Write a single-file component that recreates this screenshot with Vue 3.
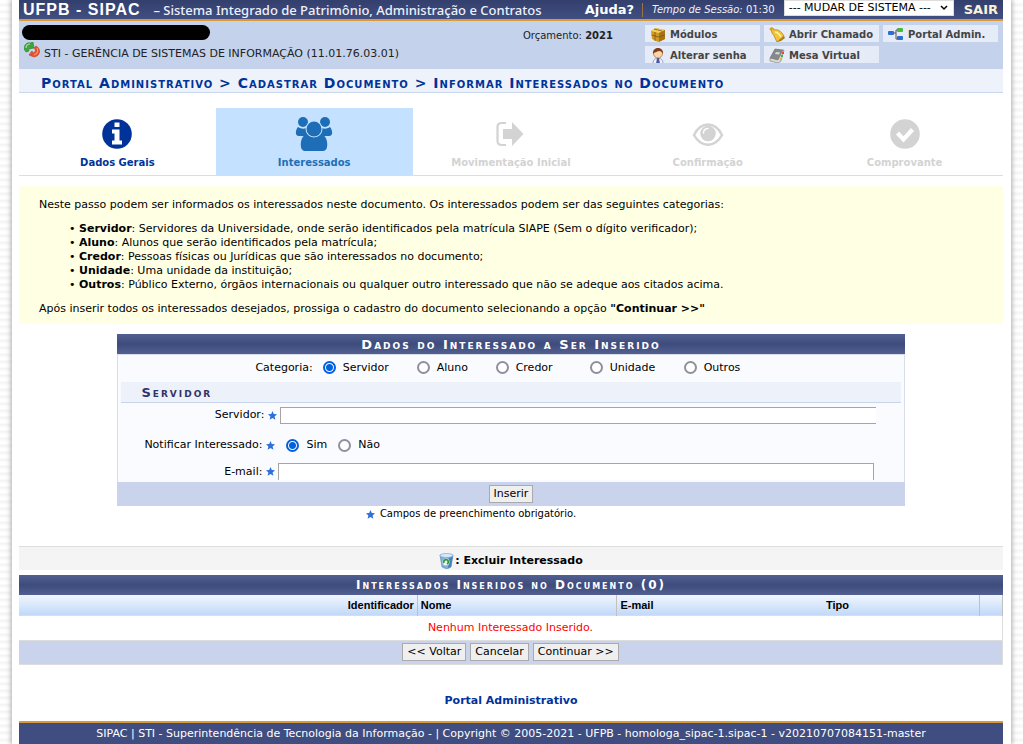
<script setup>
import { ref } from 'vue'

const categoria = ref('Servidor')
const notificar = ref('Sim')
const servidor = ref('')
const email = ref('')
const categorias = ['Servidor', 'Aluno', 'Credor', 'Unidade', 'Outros']
const ajuda = [
  ['Servidor', 'Servidores da Universidade, onde serão identificados pela matrícula SIAPE (Sem o dígito verificador);'],
  ['Aluno', 'Alunos que serão identificados pela matrícula;'],
  ['Credor', 'Pessoas físicas ou Jurídicas que são interessados no documento;'],
  ['Unidade', 'Uma unidade da instituição;'],
  ['Outros', 'Público Externo, órgãos internacionais ou qualquer outro interessado que não se adeque aos citados acima.'],
]
</script>

<template>
  <div class="page">
    <header>
      <div class="topbar">
        <h1>UFPB - SIPAC</h1>
        <span class="subtitle">– Sistema Integrado de Patrimônio, Administração e Contratos</span>
        <a class="help" href="#">Ajuda?</a>
        <span class="session"><em>Tempo de Sessão:</em> 01:30</span>
        <select aria-label="Mudar de sistema">
          <option>--- MUDAR DE SISTEMA ---</option>
        </select>
        <a class="exit" href="#">SAIR</a>
      </div>
      <div class="userbar">
        <div class="user">
          <div class="redacted"></div>
          <div class="unit">
            <svg width="16" height="16" viewBox="0 0 16 16">
              <path d="M0 7C0 3 3 0 6 1l3-1 1 6-5 1 1-3C4 4 4 6 5 9L2 10z" fill="#3fa63c" stroke="#278128" stroke-width=".6" />
              <path d="M2 6c0-3 2-4 4-4" fill="none" stroke="#a5e49a" stroke-width="1.200" />
              <path d="M12 4c4 2 5 7 1 10l-3 1-5-2 3-4 1 2c3-1 3-3 1-5z" fill="#e5532c" stroke="#c43a1b" stroke-width=".6" />
              <path d="M13 6c2 3 0 6-3 7" fill="none" stroke="#ff9a72" stroke-width="1.200" />
            </svg>
            <span>STI - GERÊNCIA DE SISTEMAS DE INFORMAÇÃO (11.01.76.03.01)</span>
          </div>
        </div>
        <div class="budget">Orçamento: <b>2021</b></div>
        <nav class="shortcuts">
          <a href="#">
            <svg width="16" height="16" viewBox="0 0 16 16">
              <path d="M1 4l5-3 9 2v9l-7 3-6-3z" fill="#d39a22" />
              <path d="M1 4l5-3 9 2-6 3z" fill="#f3cf63" />
              <path d="M9 6l6-3v9l-6 3z" fill="#a87312" />
              <path d="M5 5v9M1.500 8l7 2 6-2M4 2l8 2" stroke="#7d570f" stroke-width=".8" fill="none" />
            </svg>Módulos</a>
          <a href="#">
            <svg width="16" height="16" viewBox="0 0 16 16">
              <path d="M2 1l2 0 1 2c4-1 7 1 10 6l-7 6C6 12 6 9 3 6z" fill="#f2c437" stroke="#b98413" stroke-width=".8" />
              <path d="M6 5c3 0 4 2 6 5" stroke="#fff3a6" stroke-width="1.500" fill="none" />
              <path d="M15 9l-7 6 4-1 4-3z" fill="#b27a10" />
              <circle cx="2" cy="2" r="1.500" fill="#d89f1c" />
            </svg>Abrir Chamado</a>
          <a href="#">
            <svg width="16" height="16" viewBox="0 0 16 16">
              <path d="M5 6h3M8 3v9M8 3h3M8 12h3" stroke="#555" fill="none" />
              <rect x="0" y="4" width="6" height="4" rx="1" fill="#2c6fd0" />
              <rect x="9" y="1" width="6" height="4" rx="1" fill="#4cb63f" />
              <rect x="9" y="9" width="6" height="4" rx="1" fill="#2c6fd0" />
            </svg>Portal Admin.</a>
          <a href="#">
            <svg width="16" height="16" viewBox="0 0 16 16">
              <path d="M3 16c0-4 2-6 5-6s5 2 5 6z" fill="#eef1fb" stroke="#8089b8" stroke-width=".8" />
              <path d="M7 10h2l1 6H6z" fill="#4858a8" />
              <circle cx="8" cy="5.500" r="4.500" fill="#fbd3a5" stroke="#9b5a2c" stroke-width=".6" />
              <path d="M3 6c-1-8 11-8 10 0-1-2-2-3-4-3-2 1-5 1-6 3z" fill="#7c3f19" />
            </svg>Alterar senha</a>
          <a href="#">
            <svg width="16" height="16" viewBox="0 0 16 16">
              <path d="M1 10L6 1l8 1-3 9-3 3z" fill="#858989" stroke="#666" stroke-width=".6" />
              <path d="M1 10l8 2 5-10 1 0-3 11-3 2-8-2z" fill="#d9dcda" stroke="#777" stroke-width=".6" />
              <path d="M7 4l4 .5-1 2-4-.5z" fill="#d5d8d8" />
              <path d="M14 4v2" stroke="#e34b35" stroke-width="2" /><path d="M13 7v2" stroke="#4cae3b" stroke-width="2" /><path d="M12 10v2" stroke="#e6b62d" stroke-width="2" />
            </svg>Mesa Virtual</a>
        </nav>
      </div>
      <h2 class="crumbs">Portal Administrativo &gt; Cadastrar Documento &gt; Informar Interessados no Documento</h2>
    </header>

    <ol class="steps">
      <li class="done">
        <svg width="36" height="36" viewBox="0 0 36 36">
          <circle cx="18" cy="18" r="14.800" fill="currentColor" />
          <path d="M15.500 6.500h5v4.500h-5zM13 13.500h7.500v11H23v4H13v-4h2.500v-7H13z" fill="#fff" />
        </svg>Dados Gerais</li>
      <li class="active">
        <svg width="38" height="36" viewBox="0 0 38 36">
          <g fill="currentColor">
            <circle cx="8" cy="6" r="5" /><circle cx="30" cy="6" r="5" />
            <path d="M3 11c3 2 6 2 8 1 0 3 1 6 3 8H4c-5 0-3-7-1-9zM35 11c-3 2-6 2-8 1 0 3-1 6-3 8h10c5 0 3-7 1-9z" />
            <path d="M12 18c-5 1-7 8-6 13 0 2 2 4 4 4h18c2 0 4-2 4-4 1-5-1-12-6-13-5 4-9 4-14 0z" />
          </g>
          <circle cx="19" cy="13" r="8.500" fill="#c4e2ff" /><circle cx="19" cy="13" r="7.500" fill="currentColor" />
        </svg>Interessados</li>
      <li>
        <svg width="36" height="36" viewBox="0 0 36 36">
          <path d="M13 7H9C6 7 4.500 8.500 4.500 11v14c0 2.500 1.500 4 4.500 4h4" fill="none" stroke="currentColor" stroke-width="2.200" />
          <path d="M10 13h9V6l11.500 12L19 30v-7h-9z" fill="currentColor" />
        </svg>Movimentação Inicial</li>
      <li>
        <svg width="36" height="36" viewBox="0 0 36 36">
          <path d="M4 19C11 5 25 5 32 19 25 32 11 32 4 19z" fill="none" stroke="currentColor" stroke-width="2.400" />
          <circle cx="18" cy="17.500" r="7.800" fill="currentColor" />
          <path d="M13.500 17c0-3 2-4.500 4.500-4.500" fill="none" stroke="#fff" stroke-width="1.400" stroke-linecap="round" />
        </svg>Confirmação</li>
      <li>
        <svg width="36" height="36" viewBox="0 0 36 36">
          <circle cx="18" cy="18" r="14.800" fill="currentColor" />
          <path d="M10.500 17l6 6.500L25.500 13.500" fill="none" stroke="#fff" stroke-width="4.200" />
        </svg>Comprovante</li>
    </ol>

    <section class="info">
      <p>Neste passo podem ser informados os interessados neste documento. Os interessados podem ser das seguintes categorias:</p>
      <ul>
        <li v-for="[nome, texto] in ajuda" :key="nome"><b>{{ nome }}</b>: {{ texto }}</li>
      </ul>
      <p>Após inserir todos os interessados desejados, prossiga o cadastro do documento selecionando a opção <b>"Continuar &gt;&gt;"</b></p>
    </section>

    <form class="form" @submit.prevent>
      <h3 class="bar">Dados do Interessado a Ser Inserido</h3>
      <div class="fields">
        <div class="category" role="radiogroup" aria-labelledby="cat">
          <span id="cat">Categoria:</span>
          <label v-for="c in categorias" :key="c"><input v-model="categoria" type="radio" name="categoria" :value="c">{{ c }}</label>
        </div>
        <h4>Servidor</h4>
        <div class="row">
          <label class="name" for="servidor">Servidor:</label>
          <svg class="star" width="9" height="9" viewBox="0 0 9 9"><path d="M4.500 0l1.300 3 3.200.3-2.400 2.100.8 3.300-2.900-1.700-2.900 1.700.8-3.300L0 3.300 3.200 3z" fill="#2f6fd8" /></svg>
          <input id="servidor" v-model="servidor" class="text closed" type="text">
        </div>
        <div class="row notify" role="radiogroup" aria-labelledby="notificar">
          <span id="notificar" class="name">Notificar Interessado:</span>
          <svg class="star" width="9" height="9" viewBox="0 0 9 9"><path d="M4.500 0l1.300 3 3.200.3-2.400 2.100.8 3.300-2.900-1.700-2.900 1.700.8-3.300L0 3.300 3.200 3z" fill="#2f6fd8" /></svg>
          <label v-for="n in ['Sim', 'Não']" :key="n"><input v-model="notificar" type="radio" name="notificar" :value="n">{{ n }}</label>
        </div>
        <div class="row mail">
          <label class="name" for="email">E-mail:</label>
          <svg class="star" width="9" height="9" viewBox="0 0 9 9"><path d="M4.500 0l1.300 3 3.200.3-2.400 2.100.8 3.300-2.900-1.700-2.900 1.700.8-3.300L0 3.300 3.200 3z" fill="#2f6fd8" /></svg>
          <input id="email" v-model="email" class="text open" type="text">
        </div>
      </div>
      <div class="actions"><button type="submit">Inserir</button></div>
    </form>
    <p class="required">
      <svg width="9" height="9" viewBox="0 0 9 9"><path d="M4.500 0l1.300 3 3.200.3-2.400 2.100.8 3.300-2.900-1.700-2.900 1.700.8-3.300L0 3.300 3.200 3z" fill="#2f6fd8" /></svg>
      Campos de preenchimento obrigatório.
    </p>

    <div class="legend">
      <svg width="16" height="16" viewBox="0 0 16 16">
        <path d="M1 2l13 0-2 12-4 2-5-2z" fill="#7faedb" stroke="#5b88ba" stroke-width=".6" />
        <path d="M10 3l4-1-2 12-3 1z" fill="#4681c2" />
        <ellipse cx="7.500" cy="2.500" rx="6.500" ry="2" fill="#d8eafa" stroke="#6f9cc9" stroke-width=".6" />
        <circle cx="7" cy="9" r="3.500" fill="#e9f7e9" />
        <path d="M5 10a2.300 2.300 0 1 1 3 1" fill="none" stroke="#2a9b3c" stroke-width="1.800" />
      </svg>
      <b>: Excluir Interessado</b>
    </div>

    <table>
      <caption class="bar">Interessados Inseridos no Documento (0)</caption>
      <colgroup><col class="c-id"><col class="c-name"><col class="c-mail"><col class="c-type"><col></colgroup>
      <thead>
        <tr><th class="right">Identificador</th><th>Nome</th><th class="plain">E-mail</th><th class="center">Tipo</th><th></th></tr>
      </thead>
      <tbody><tr><td colspan="5">Nenhum Interessado Inserido.</td></tr></tbody>
    </table>
    <div class="actions pager">
      <button type="button">&lt;&lt; Voltar</button>
      <button type="button">Cancelar</button>
      <button type="button">Continuar &gt;&gt;</button>
    </div>

    <a class="back" href="#">Portal Administrativo</a>

    <footer>SIPAC | STI - Superintendência de Tecnologia da Informação - | Copyright © 2005-2021 - UFPB - homologa_sipac-1.sipac-1 - v20210707084151-master</footer>
  </div>
</template>

<style>
body {
  margin: 0;
  overflow-x: hidden;
  background: repeating-linear-gradient(#fff 0 3px, #f5f5f5 4px 5px, #fafafa 6px 7px);
}
</style>

<style scoped>
* { box-sizing: border-box; }
.page {
  margin: 0 12px;
  padding: 0 8px 0 7px;
  background: #fff;
  box-shadow: 0 0 5px 1px #aaa;
  font: 11px/14px Verdana, "DejaVu Sans", sans-serif;
  color: #000;
}
h1, h2, h3, h4, p, ul, ol { margin: 0; padding: 0; }
a { text-decoration: none; }
svg { flex: none; display: block; }

.topbar {
  display: flex;
  align-items: center;
  height: 21px;
  padding: 0 5px 0 4px;
  border-bottom: 2px solid #d99a3a;
  background: linear-gradient(#333f6c, #404e82);
  color: #eef1fa;
  white-space: nowrap;
}
h1 { font: bold 16px/18px "Liberation Sans", Arial, sans-serif; letter-spacing: 1px; color: #fff; }
.subtitle { margin-left: 13px; font: 500 13px/18px "Noto Sans", sans-serif; }
.help { margin-left: auto; padding-right: 8px; border-right: 1px solid #9a7444; font-weight: bold; font-size: 13px; color: #fff; }
.session { margin: 0 9px; font-size: 10px; }
select {
  appearance: none;
  align-self: flex-start;
  width: 170px;
  height: 16px;
  padding: 0 4px;
  border: 1px solid #ddd;
  border-radius: 0;
  background: #fff url("data:image/svg+xml,%3Csvg xmlns='http://www.w3.org/2000/svg' width='8' height='6'%3E%3Cpath d='M1 1l3 3 3-3' fill='none' stroke='black' stroke-width='1.500'/%3E%3C/svg%3E") no-repeat right 5px center;
  font: 11px/14px Verdana, "DejaVu Sans", sans-serif;
  color: #000;
}
.exit { margin-left: 10px; font-weight: bold; font-size: 13px; color: #fcf3d6; }

.userbar {
  display: flex;
  align-items: flex-start;
  height: 48px;
  padding: 4px 5px 0 3px;
  background: #c4d2eb;
  color: #222;
}
.redacted { width: 188px; height: 15px; border-radius: 8px; background: #000; }
.unit { display: flex; gap: 4px; padding-left: 2px; margin-top: 2px; font-size: 11px; line-height: 24px; white-space: nowrap; }
.budget { margin-left: auto; padding-right: 32px; font-size: 10px; line-height: 22px; }
.shortcuts { display: grid; grid-template-columns: repeat(3, 115px); grid-auto-rows: 17px; gap: 4px; }
.shortcuts a {
  display: flex;
  align-items: center;
  gap: 4px;
  padding: 2px 5px 0;
  overflow: hidden;
  background: #e5ebf7;
  font-size: 10px;
  font-weight: bold;
  color: #444;
}
.crumbs {
  height: 24px;
  padding: 2px 22px 0;
  border-bottom: 1px solid #c9d7ee;
  background: #eef3fb;
  font-size: 14px;
  line-height: 24px;
  font-variant: small-caps;
  letter-spacing: 1px;
  color: #003399;
}

.steps { display: grid; grid-template-columns: repeat(5, 1fr); margin-top: 15px; border-bottom: 1px solid #ddd; list-style: none; }
.steps li {
  display: flex;
  flex-direction: column;
  align-items: center;
  height: 67px;
  padding-top: 8px;
  font-size: 10px;
  font-weight: bold;
  line-height: 22px;
  color: #d3d3d3;
}
.steps .done { color: #003399; }
.steps .active { background: #c4e2ff; color: #1e6eb7; }

.info { margin-top: 10px; padding: 12px 20px 8px; background: #ffffe4; }
.info ul { margin: 10px 0; padding-left: 40px; list-style-type: "• "; }

.form { width: 80%; margin: 10px auto 0; }
.bar {
  height: 20px;
  background: linear-gradient(#525f92, #3e4b7d 50%, #525f92);
  font-size: 12px;
  font-weight: bold;
  line-height: 21px;
  font-variant: small-caps;
  letter-spacing: 2px;
  text-align: center;
  color: #fff;
}
h3.bar { font-size: 13px; }
.fields { padding: 0 3px 2px; border: 1px solid #d9dde8; border-bottom: 0; background: #fafbff; }
.category { display: flex; align-items: center; height: 27px; padding: 0 0 2px 134px; }
.category label { display: flex; align-items: center; width: 94px; }
.category label:nth-of-type(1) { margin-left: 10px; }
.category label:nth-of-type(2) { width: 79px; }
input[type="radio"] {
  appearance: none;
  flex: none;
  width: 13px;
  height: 13px;
  margin: 0 7px 0 0;
  border: 2px solid #8f8f9d;
  border-radius: 50%;
  background: #fff;
}
input[type="radio"]:checked { border-color: #0060df; background: radial-gradient(#0060df 3px, #fff 4px); }
h4 {
  height: 21px;
  padding-left: 20px;
  border-bottom: 1px solid #c8d5ec;
  background: #ecf1fa;
  font-size: 13px;
  line-height: 21px;
  font-variant: small-caps;
  letter-spacing: 2px;
  color: #333366;
}
.row { display: flex; align-items: center; height: 24px; }
.name { width: 143px; text-align: right; }
.star { margin: 0 3px 0 4px; }
.notify { height: 36px; }
.notify .name, .mail .name { width: 141px; }
.notify label { display: flex; align-items: center; margin-left: 8px; }
.notify label + label { margin-left: 11px; }
.mail { height: 17px; }
.text { width: 596px; height: 17px; padding: 0 4px; border: 1px solid #a5a5a5; background: #fff; font: inherit; }
.closed { border-right: 0; }
.open { border-bottom: 0; }
.actions { display: flex; align-items: center; justify-content: center; gap: 4px; height: 24px; background: #c9d4ec; }
button { height: 18px; padding: 0 4px; border: 1px solid #aaa; background: #efefef; font: inherit; color: #000; }
.required { display: flex; align-items: center; justify-content: center; gap: 5px; height: 16px; padding-right: 80px; font-size: 10px; }

.legend { display: flex; align-items: center; justify-content: center; height: 24px; margin: 24px 0 5px; padding-top: 4px; border-top: 1px solid #ddd; background: #f4f4f4; }
table { width: 100%; table-layout: fixed; border-collapse: collapse; }
.c-id { width: 40.5%; }
.c-name { width: 20.3%; }
.c-mail { width: 8%; }
.c-type { width: 28.9%; }
thead { background: linear-gradient(#f1f6ff, #c1d9f9); }
th { height: 20px; padding: 0 3px; border-right: 1px solid #c0c0c0; font: bold 11px/14px "Liberation Sans", Arial, sans-serif; text-align: left; }
.right { text-align: right; }
.center { text-align: center; }
.plain { border-right: 0; }
td { height: 25px; padding: 0; border: solid #ddd; border-width: 1px 1px 1px 0; text-align: center; color: #f00; }
.pager { border: solid #ddd; border-width: 0 1px 1px 0; }
.back { display: block; margin: 29px 0 13px; font-weight: bold; text-align: center; color: #003399; }
footer { height: 23px; border-top: 2px solid #d99a3a; background: #404d80; font-size: 11px; line-height: 21px; text-align: center; color: #fff; white-space: nowrap; }
</style>
